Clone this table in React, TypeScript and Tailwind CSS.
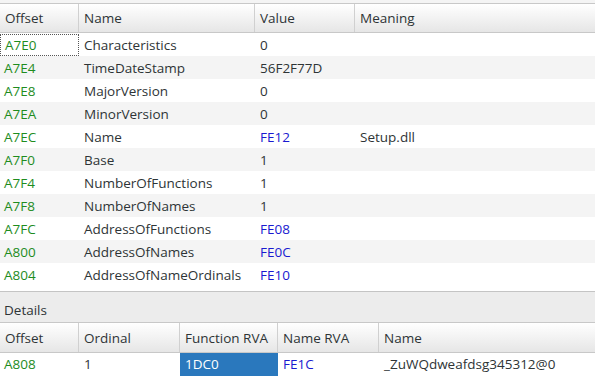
import React from "react";

const G = "text-[#1e8c1e]";
const B = "text-[#1a1ad0]";

type Row = { off: string; name: string; value: string; blue?: boolean; meaning?: string };

const rows: Row[] = [
  { off: "A7E0", name: "Characteristics", value: "0" },
  { off: "A7E4", name: "TimeDateStamp", value: "56F2F77D" },
  { off: "A7E8", name: "MajorVersion", value: "0" },
  { off: "A7EA", name: "MinorVersion", value: "0" },
  { off: "A7EC", name: "Name", value: "FE12", blue: true, meaning: "Setup.dll" },
  { off: "A7F0", name: "Base", value: "1" },
  { off: "A7F4", name: "NumberOfFunctions", value: "1" },
  { off: "A7F8", name: "NumberOfNames", value: "1" },
  { off: "A7FC", name: "AddressOfFunctions", value: "FE08", blue: true },
  { off: "A800", name: "AddressOfNames", value: "FE0C", blue: true },
  { off: "A804", name: "AddressOfNameOrdinals", value: "FE10", blue: true },
];

function HeadCell({ w, label, last }: { w: string; label: string; last?: boolean }) {
  return (
    <div className={`${w} h-full flex items-center pl-[5px] pt-[1px] ${last ? "" : "border-r border-[#d0d0d0]"}`}>
      {label}
    </div>
  );
}

export default function App() {
  return (
    <div
      className="w-[595px] h-[380px] bg-white text-[13.5px] text-[#2e3436] overflow-hidden flex flex-col"
      style={{ fontFamily: '"Open Sans", "DejaVu Sans", sans-serif' }}
    >
      <div className="h-[4px] shrink-0 bg-[#f4f4f4] border-b border-[#c8c8c8]" />
      <div className="h-[29px] shrink-0 flex border-b border-[#c8c8c8] bg-gradient-to-b from-[#ffffff] to-[#e6e6e6]">
        <HeadCell w="w-[79px]" label="Offset" />
        <HeadCell w="w-[176px]" label="Name" />
        <HeadCell w="w-[100px]" label="Value" />
        <HeadCell w="flex-1" label="Meaning" last />
      </div>
      <div className="flex flex-col shrink-0">
        {rows.map((r, i) => (
          <div key={r.off} className={`h-[23px] flex items-center pt-[1px] ${i % 2 === 1 ? "bg-[#f4f4f4]" : "bg-white"}`}>
            <div
              className={`w-[79px] h-full flex items-center pl-[4px] ${G} ${
                i === 0 ? "border border-dotted border-[#555]" : ""
              }`}
            >
              {r.off}
            </div>
            <div className="w-[176px] pl-[5px]">{r.name}</div>
            <div className={`w-[100px] pl-[5px] ${r.blue ? B : ""}`}>{r.value}</div>
            <div className="flex-1 pl-[5px]">{r.meaning ?? ""}</div>
          </div>
        ))}
      </div>
      <div className="h-[5px] shrink-0 bg-white" />
      <div className="flex-1 flex flex-col bg-[#ececec] border-t border-[#c4c4c4]">
        <div className="h-[30px] shrink-0 flex items-center pl-[4px] pt-[6px]">Details</div>
        <div className="h-[31px] shrink-0 flex border-y border-[#c8c8c8] bg-gradient-to-b from-[#ffffff] to-[#e6e6e6]">
          <HeadCell w="w-[79px]" label="Offset" />
          <HeadCell w="w-[101px]" label="Ordinal" />
          <HeadCell w="w-[98px]" label="Function RVA" />
          <HeadCell w="w-[101px]" label="Name RVA" />
          <HeadCell w="flex-1" label="Name" last />
        </div>
        <div className="h-[23px] shrink-0 flex items-center bg-white">
          <div className={`w-[79px] pl-[4px] ${G}`}>A808</div>
          <div className="w-[101px] pl-[5px]">1</div>
          <div className="w-[98px] h-full flex items-center pl-[5px] bg-[#2a78bd] text-white">1DC0</div>
          <div className={`w-[101px] pl-[5px] ${B}`}>FE1C</div>
          <div className="flex-1 pl-[5px]">_ZuWQdweafdsg345312@0</div>
        </div>
        <div className="flex-1 bg-white" />
      </div>
    </div>
  );
}
